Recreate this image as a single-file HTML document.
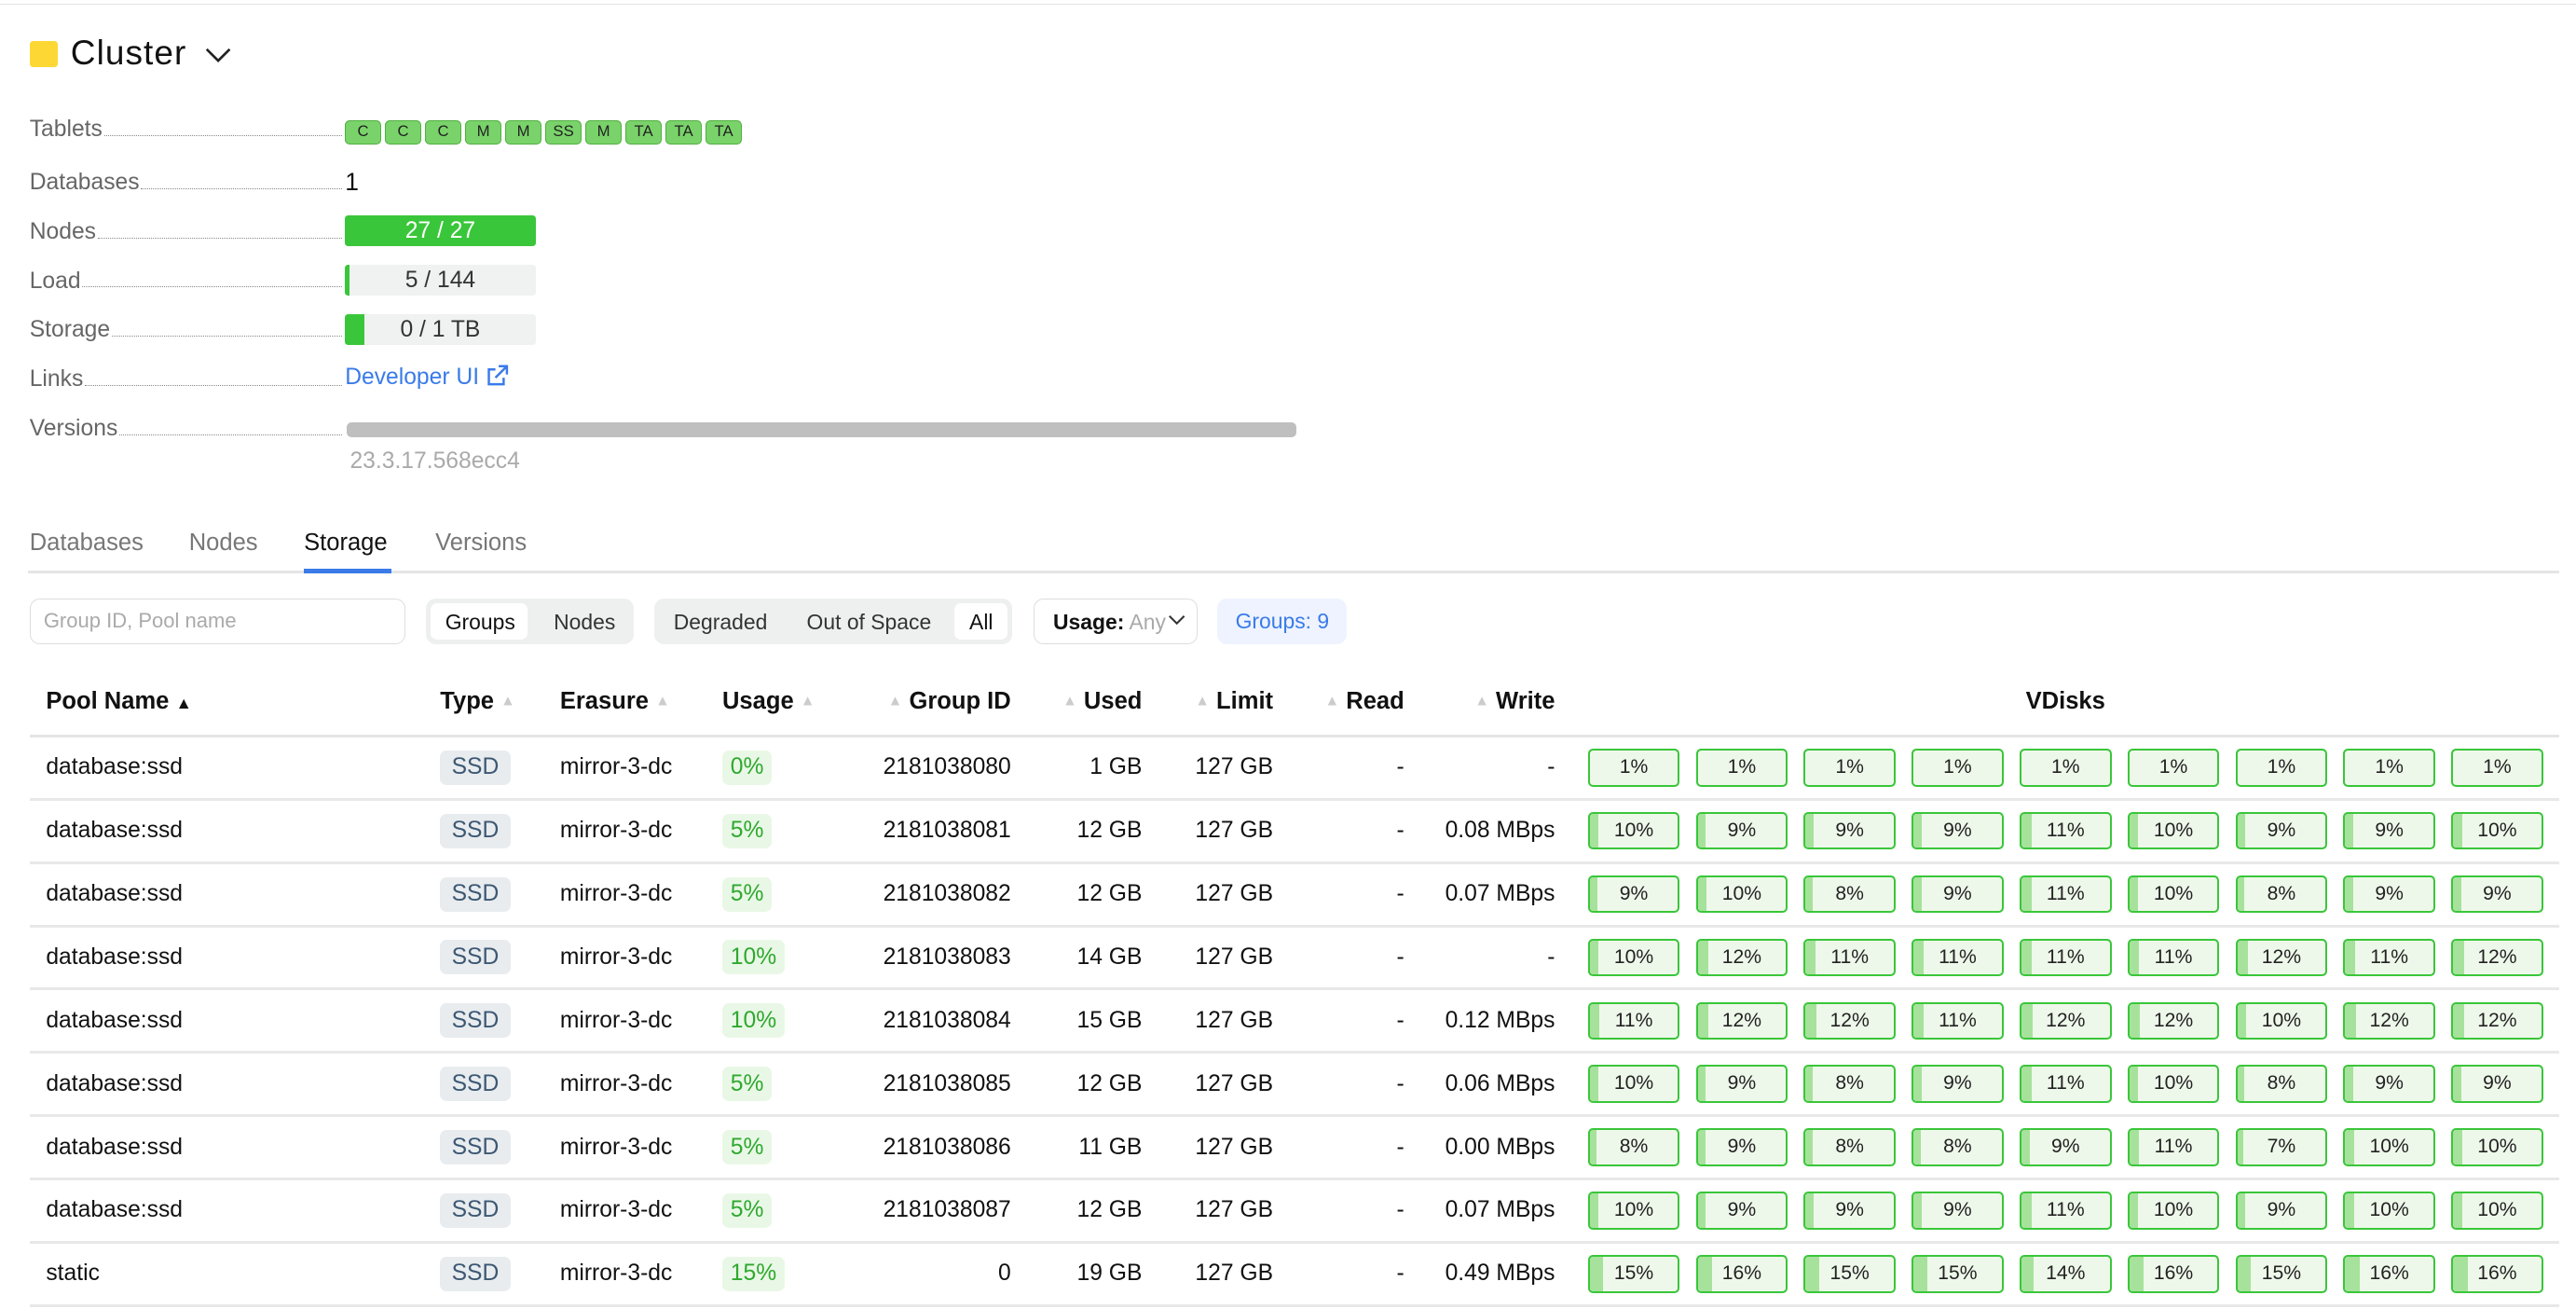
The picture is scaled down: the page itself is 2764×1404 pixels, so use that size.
<!DOCTYPE html>
<html><head><meta charset="utf-8"><style>
html,body{margin:0;padding:0;background:#fff;width:2764px;height:1404px;overflow:hidden}
#w{zoom:1.7628;width:1568px;height:797px;position:relative;font-family:"Liberation Sans",sans-serif;color:#111}
.a{position:absolute;white-space:nowrap}
.lbl{position:absolute;left:18px;width:190px;font-size:14px;color:#666;display:flex;align-items:flex-end;height:18px}
.lbl span{flex:0 0 auto}
.lbl i{flex:1;border-bottom:1px dotted #888;margin:0 0 4px 1px}
.chip{display:inline-block;box-sizing:border-box;width:22px;height:15px;background:#7ad36a;border:1px solid #4faf3f;border-radius:3px;font-size:9.5px;text-align:center;line-height:13px;margin-right:2.4px;color:#222}
.bar{position:absolute;left:210px;width:116px;height:19px;background:#f0f1f1;border-radius:2px;overflow:hidden;font-size:14px;text-align:center;line-height:19px;color:#333}
.bar b{position:absolute;left:0;top:0;bottom:0;background:#3ac63a}
.bar span{position:relative}
table{position:absolute;left:18px;top:404px;border-collapse:collapse;width:1540px;font-size:14px}
th{height:38px;padding-top:4px;font-weight:bold;text-align:left;padding-left:10px;padding-right:10px;border-bottom:2px solid #e5e5e5;font-size:14.5px}
td{height:36.8px;padding:0 10px;border-bottom:2px solid #e8e8e8}
.r{text-align:right}
.s{color:#ccc;font-size:9px;vertical-align:2px}
.ssd{display:inline-block;background:#e8ecef;color:#3d5873;padding:2px 7px;border-radius:4px;line-height:17px}
.u{display:inline-block;background:#e9f8e6;color:#2fa82f;padding:2px 5px;border-radius:4px;line-height:17px}
.vd{display:flex;gap:9.7px}
.v{position:relative;box-sizing:border-box;width:56px;height:23px;border:1.5px solid #3ac63a;border-radius:3px;background:#eef8ea;font-size:12px;text-align:center;line-height:20px;overflow:hidden;color:#222}
.v b{position:absolute;left:0;top:0;bottom:0;background:#a6e29b}
.v span{position:relative}
</style></head><body><div id="w">
<div class="a" style="left:0;right:0;top:2px;height:1px;background:#e3e3e3"></div>
<div class="a" style="left:18px;top:25px;width:17px;height:16px;background:#fdd835;border-radius:2px"></div>
<div class="a" style="left:43px;top:20px;font-size:21px;letter-spacing:0.6px">Cluster</div>
<svg class="a" style="left:125px;top:29px" width="16" height="10" viewBox="0 0 16 10"><path d="M1 1l7 7 7-7" fill="none" stroke="#222" stroke-width="1.5"/></svg>

<div class="lbl" style="top:69px"><span>Tablets</span><i></i></div>
<div class="a" style="left:210px;top:73px;font-size:0"><span class="chip">C</span><span class="chip">C</span><span class="chip">C</span><span class="chip">M</span><span class="chip">M</span><span class="chip">SS</span><span class="chip">M</span><span class="chip">TA</span><span class="chip">TA</span><span class="chip">TA</span></div>
<div class="lbl" style="top:101px"><span>Databases</span><i></i></div>
<div class="a" style="left:210px;top:102px;font-size:15px">1</div>
<div class="lbl" style="top:131px"><span>Nodes</span><i></i></div>
<div class="bar" style="top:131px;background:#3ac63a;color:#fff">27 / 27</div>
<div class="lbl" style="top:161px"><span>Load</span><i></i></div>
<div class="bar" style="top:161px"><b style="width:3px"></b><span>5 / 144</span></div>
<div class="lbl" style="top:191px"><span>Storage</span><i></i></div>
<div class="bar" style="top:191px"><b style="width:12px"></b><span>0 / 1 TB</span></div>
<div class="lbl" style="top:221px"><span>Links</span><i></i></div>
<div class="a" style="left:210px;top:222px;font-size:14px;color:#3a7be8">Developer UI <svg width="14" height="14" viewBox="0 0 14 14" style="vertical-align:-2px"><path d="M6 3H2v9h9V8M8 1h5v5M13 1L6 8" fill="none" stroke="#3a7be8" stroke-width="1.4"/></svg></div>
<div class="lbl" style="top:251px"><span>Versions</span><i></i></div>
<div class="a" style="left:211px;top:257px;width:578px;height:9px;background:#bfbfbf;border-radius:3px"></div>
<div class="a" style="left:213px;top:273px;font-size:14px;color:#aaa">23.3.17.568ecc4</div>

<div class="a" style="left:17px;right:10px;top:347px;height:2px;background:#e5e5e5"></div>
<div class="a" style="left:18px;top:322px;font-size:14.5px;color:#777">Databases</div>
<div class="a" style="left:115px;top:322px;font-size:14.5px;color:#777">Nodes</div>
<div class="a" style="left:185px;top:322px;font-size:14.5px;color:#111">Storage</div>
<div class="a" style="left:265px;top:322px;font-size:14.5px;color:#777">Versions</div>
<div class="a" style="left:185px;top:346px;width:53px;height:3px;background:#3a7be8"></div>

<div class="a" style="left:18px;top:364px;border:1px solid #ddd;border-radius:6px;font-size:12.5px;color:#aaa;line-height:26px;padding-left:8px;box-sizing:border-box;width:229px;height:28px">Group ID, Pool name</div>
<div class="a" style="left:259px;top:364px;width:127px;height:28px;background:#eef0f0;border-radius:6px"></div>
<div class="a" style="left:262px;top:367px;width:59px;height:22px;background:#fff;border-radius:4px"></div>
<div class="a" style="left:271px;top:371px;font-size:13px">Groups</div>
<div class="a" style="left:337px;top:371px;font-size:13px;color:#333">Nodes</div>
<div class="a" style="left:398px;top:364px;width:218px;height:28px;background:#eef0f0;border-radius:6px"></div>
<div class="a" style="left:581px;top:367px;width:32px;height:22px;background:#fff;border-radius:4px"></div>
<div class="a" style="left:410px;top:371px;font-size:13px;color:#333">Degraded</div>
<div class="a" style="left:491px;top:371px;font-size:13px;color:#333">Out of Space</div>
<div class="a" style="left:590px;top:371px;font-size:13px">All</div>
<div class="a" style="left:629px;top:364px;width:100px;height:28px;border:1px solid #ddd;border-radius:6px;box-sizing:border-box"></div>
<div class="a" style="left:641px;top:371px;font-size:13px"><b>Usage:</b> <span style="color:#aaa">Any</span></div>
<svg class="a" style="left:711px;top:374px" width="11" height="7" viewBox="0 0 11 7"><path d="M1 1l4.5 4.5L10 1" fill="none" stroke="#333" stroke-width="1.2"/></svg>
<div class="a" style="left:741px;top:364px;width:79px;height:28px;background:#eef3ff;border-radius:6px;font-size:13px;color:#3a7be8;line-height:28px;text-align:center">Groups: 9</div>

<table>
<colgroup><col style="width:241px"><col style="width:73px"><col style="width:99px"><col style="width:90px"><col style="width:106px"><col style="width:80px"><col style="width:80px"><col style="width:80px"><col style="width:92px"><col></colgroup>
<tbody>
<tr><th>Pool Name <span style="font-size:10px;color:#111">▲</span></th><th>Type <span class="s">▲</span></th><th>Erasure <span class="s">▲</span></th><th>Usage <span class="s">▲</span></th><th class="r"><span class="s">▲</span> Group ID</th><th class="r"><span class="s">▲</span> Used</th><th class="r"><span class="s">▲</span> Limit</th><th class="r"><span class="s">▲</span> Read</th><th class="r"><span class="s">▲</span> Write</th><th style="text-align:center">VDisks</th></tr>
</tbody>
</table>
</div>
<script>
var d=[["database:ssd","0%","2181038080","1 GB","-",[1,1,1,1,1,1,1,1,1]],
["database:ssd","5%","2181038081","12 GB","0.08 MBps",[10,9,9,9,11,10,9,9,10]],
["database:ssd","5%","2181038082","12 GB","0.07 MBps",[9,10,8,9,11,10,8,9,9]],
["database:ssd","10%","2181038083","14 GB","-",[10,12,11,11,11,11,12,11,12]],
["database:ssd","10%","2181038084","15 GB","0.12 MBps",[11,12,12,11,12,12,10,12,12]],
["database:ssd","5%","2181038085","12 GB","0.06 MBps",[10,9,8,9,11,10,8,9,9]],
["database:ssd","5%","2181038086","11 GB","0.00 MBps",[8,9,8,8,9,11,7,10,10]],
["database:ssd","5%","2181038087","12 GB","0.07 MBps",[10,9,9,9,11,10,9,10,10]],
["static","15%","0","19 GB","0.49 MBps",[15,16,15,15,14,16,15,16,16]]];
var h="";d.forEach(function(r){h+='<tr><td>'+r[0]+'</td><td><span class="ssd">SSD</span></td><td>mirror-3-dc</td><td><span class="u">'+r[1]+'</span></td><td class="r">'+r[2]+'</td><td class="r">'+r[3]+'</td><td class="r">127 GB</td><td class="r">-</td><td class="r">'+r[4]+'</td><td><div class="vd">';r[5].forEach(function(p){h+='<div class="v"><b style="width:'+(p>1?p*0.55:0)+'px"></b><span>'+p+'%</span></div>'});h+='</div></td></tr>'});
document.querySelector("tbody").insertAdjacentHTML("beforeend",h);
</script>
</body></html>
